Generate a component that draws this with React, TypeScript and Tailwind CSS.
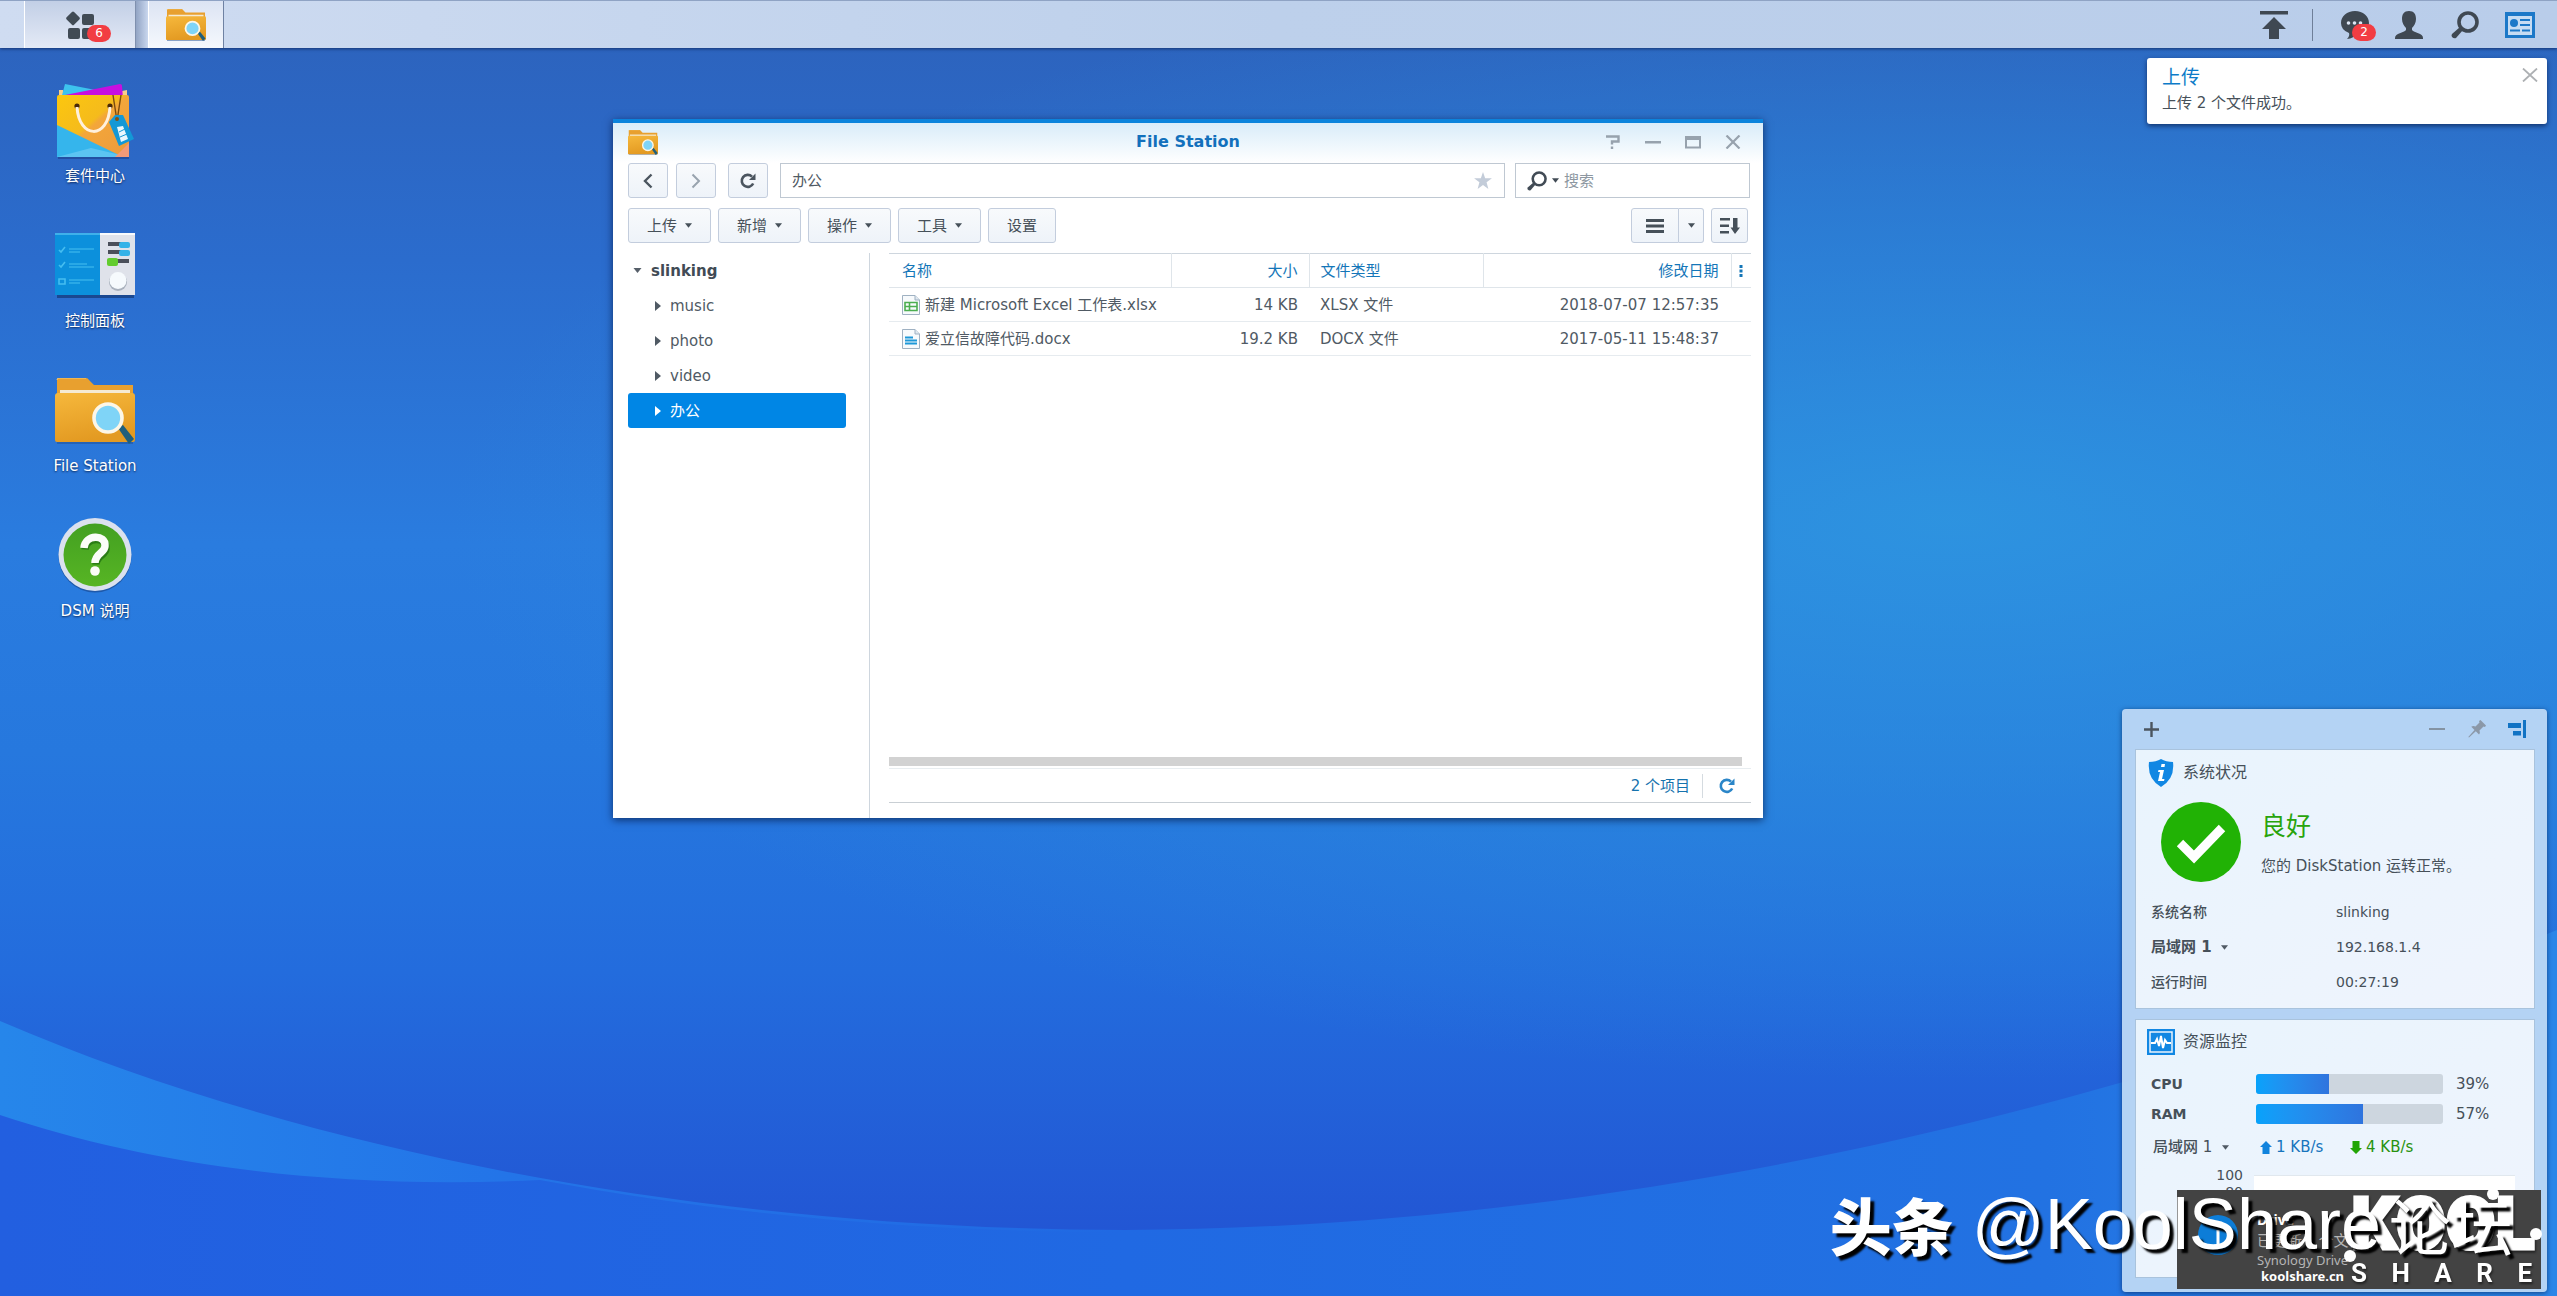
import React from "react";

const FONT = "font-['DejaVu_Sans','Noto_Sans_CJK_SC',sans-serif]";

function Wallpaper() {
  return (
    <svg aria-hidden="true" className="absolute inset-0 h-full w-full" viewBox="0 0 2557 1296" preserveAspectRatio="none">
      <defs>
        <linearGradient id="sky" x1="0" y1="0" x2="0" y2="1">
          <stop offset="0" stopColor="#2d62bb" />
          <stop offset="0.2" stopColor="#2b6ccd" />
          <stop offset="0.42" stopColor="#2a7cdf" />
          <stop offset="0.58" stopColor="#2678de" />
          <stop offset="0.75" stopColor="#236cdd" />
          <stop offset="0.95" stopColor="#2256d4" />
          <stop offset="1" stopColor="#2256d4" />
        </linearGradient>
        <radialGradient id="glow" gradientUnits="userSpaceOnUse" cx="0" cy="0" r="1" gradientTransform="translate(1950 520) scale(1500 560)">
          <stop offset="0" stopColor="#2e97e0" stopOpacity="0.85" />
          <stop offset="0.5" stopColor="#2c90de" stopOpacity="0.5" />
          <stop offset="1" stopColor="#2c90de" stopOpacity="0" />
        </radialGradient>
        <linearGradient id="waveA" x1="0" y1="0" x2="1" y2="0">
          <stop offset="0" stopColor="#2686ea" />
          <stop offset="0.2" stopColor="#2374e8" />
          <stop offset="0.44" stopColor="#2069e3" />
          <stop offset="0.8" stopColor="#2272e2" />
          <stop offset="1" stopColor="#2b86e8" />
        </linearGradient>
        <linearGradient id="waveB" x1="0" y1="0" x2="1" y2="0">
          <stop offset="0" stopColor="#225fe0" />
          <stop offset="1" stopColor="#2069e3" />
        </linearGradient>
      </defs>
      <rect width="2557" height="1296" fill="url(#sky)" />
      <rect width="2557" height="1296" fill="url(#glow)" />
      <path d="M0 1021C300 1150 700 1229 1125 1230C1600 1228 2100 1120 2557 930V1296H0Z" fill="url(#waveA)" />
      <path d="M0 1115C150 1165 330 1190 540 1180C740 1217 930 1232 1125 1232V1296H0Z" fill="url(#waveB)" />
    </svg>
  );
}

function Caret({ className = "" }: { className?: string }) {
  return (
    <svg aria-hidden="true" viewBox="0 0 8 5" className={`h-[5px] w-[7px] shrink-0 ${className}`}>
      <path d="M0 0H8L4 5Z" fill="currentColor" />
    </svg>
  );
}

function FolderSearch({ className }: { className: string }) {
  return (
    <svg aria-hidden="true" viewBox="0 0 80 66" className={className} preserveAspectRatio="none">
      <defs>
        <linearGradient id="folder" x1="0" y1="0" x2="0.3" y2="1">
          <stop offset="0" stopColor="#f6b83c" />
          <stop offset="1" stopColor="#e39a22" />
        </linearGradient>
      </defs>
      <path d="M2 64H78V66H2Z" fill="#1f4d92" opacity="0.5" />
      <path d="M2 2Q2 0 4 0H31Q33 0 34 2L39 7H78V20H2Z" fill="#e8a02f" />
      <path d="M2 2Q2 0 4 0H31" stroke="#f7cb74" fill="none" />
      <path d="M5 12H75V20H5Z" fill="#f5ead2" />
      <path d="M0 18Q0 15 3 15H77Q80 15 80 18V62Q80 64 78 64H2Q0 64 0 62Z" fill="url(#folder)" />
      <path d="M63 50L68 47L79 61L74 66Z" fill="#1f5f7c" />
      <circle cx="53" cy="40" r="14" fill="#7fd4f7" stroke="#fdf6e6" strokeWidth="3.6" />
    </svg>
  );
}

function BagIcon() {
  return (
    <svg aria-hidden="true" viewBox="0 0 80 76" className="h-19 w-20">
      <defs>
        <linearGradient id="bag" x1="0" y1="0" x2="1" y2="1">
          <stop offset="0" stopColor="#fcc70e" />
          <stop offset="0.45" stopColor="#f5bb1c" />
          <stop offset="0.5" stopColor="#f3a63a" />
          <stop offset="1" stopColor="#ec9a3c" />
        </linearGradient>
      </defs>
      <path d="M3 74H74V76H3Z" fill="#1d3f8a" opacity="0.6" />
      <path d="M4 7H8L10 14H4ZM67 8L72 7V14H67Z" fill="#f7cf8c" />
      <path d="M10 1L66 12L64 16H6Z" fill="#3dc3ee" />
      <path d="M10 12L65 1Q67 1 67 3L68 15H12Z" fill="#c70fe0" />
      <path d="M2 14Q2 12 4 12H72Q74 12 74 14V74H2Z" fill="url(#bag)" />
      <path d="M2 42L68 74H2Z" fill="#35b5ec" />
      <path d="M2 74L36 65L74 74Z" fill="#5cc4f2" />
      <path d="M60 74L74 60V74Z" fill="#f39a78" />
      <circle cx="22" cy="23" r="2.6" fill="#4a2a08" />
      <circle cx="55" cy="23" r="2.6" fill="#4a2a08" />
      <path d="M22 24C24 56 53 57 55 24" fill="none" stroke="#fff0dc" strokeWidth="3" />
      <path d="M58 12L62 38L66 12" fill="none" stroke="#7a4b10" strokeWidth="1.4" />
      <path d="M54 39L60 32L68 32L79 56L64 63Z" fill="#1398d6" />
      <circle cx="62" cy="36" r="2" fill="#87510e" />
      <path d="M62 44L68 43L73 56L66 59Z" fill="#e9f7fd" />
      <path d="M64 49L70 46M65 54L72 51" stroke="#1398d6" strokeWidth="1" />
    </svg>
  );
}

function ControlPanelIcon() {
  return (
    <svg aria-hidden="true" viewBox="0 0 80 66" className="h-[66px] w-20">
      <path d="M2 62H79V65H2Z" fill="#163c7c" opacity="0.75" />
      <path d="M0 0H45V62H0Z" fill="#0c90dc" />
      <path d="M0 0H45V2H0Z" fill="#3fb0ea" />
      <path d="M45 0H80V62H45Z" fill="#dfe2ea" />
      <path d="M45 0H80V2H45Z" fill="#f8fafc" />
      <g stroke="#45bdf0" strokeWidth="1.6" fill="none">
        <path d="M4 17L6 19L10 14M4 32L6 34L10 29M4 46H10V51H4Z" />
        <path d="M14 16H39M14 19H25M14 31H32M14 34H39M14 47H39M14 50H25" opacity="0.7" />
      </g>
      <path d="M53 9H66V13H53ZM53 17H66V21H53ZM61 26H74V30H61Z" fill="#4a4f5a" />
      <rect x="64" y="9" width="11" height="6" rx="2" fill="#34b2e8" />
      <rect x="64" y="17" width="11" height="6" rx="2" fill="#34b2e8" />
      <rect x="52" y="25" width="11" height="8" rx="2" fill="#62cc2e" />
      <circle cx="63" cy="49" r="9" fill="#a9b1bd" />
      <circle cx="63" cy="47.500" r="8.500" fill="#f6fafd" />
    </svg>
  );
}

function HelpIcon() {
  return (
    <svg aria-hidden="true" viewBox="0 0 74 76" className="h-19 w-[74px]">
      <defs>
        <linearGradient id="help" x1="0" y1="0" x2="0" y2="1">
          <stop offset="0" stopColor="#43a021" />
          <stop offset="1" stopColor="#57b524" />
        </linearGradient>
      </defs>
      <circle cx="37" cy="38" r="36.500" fill="#153e80" opacity="0.55" />
      <circle cx="37" cy="36.500" r="36.500" fill="#dbe1ee" />
      <circle cx="37" cy="37" r="31.500" fill="url(#help)" />
      <path d="M26 30C27 17 48 17 47 29C47 36 37 36 37 45" fill="none" stroke="#2b7d14" strokeWidth="7.500" transform="translate(1 1.500)" />
      <path d="M26 30C27 16 48 16 47 28C47 35 37 35 37 45" fill="none" stroke="#fbfdf7" strokeWidth="7.500" />
      <circle cx="37" cy="53" r="4.800" fill="#fbfdf7" />
    </svg>
  );
}

const desktopItems = [
  { label: "套件中心", icon: <BagIcon /> },
  { label: "控制面板", icon: <ControlPanelIcon /> },
  { label: "File Station", icon: <FolderSearch className="h-[66px] w-20" /> },
  { label: "DSM 说明", icon: <HelpIcon /> },
];

function Magnifier({ className }: { className: string }) {
  return (
    <svg aria-hidden="true" viewBox="0 0 28 28" className={className}>
      <circle cx="17" cy="11" r="9" fill="none" stroke="currentColor" strokeWidth="3.600" />
      <path d="M9 16L12 19L5 27Q3 28 1 26Q0 24 1 23Z" fill="currentColor" />
    </svg>
  );
}

function Refresh({ className }: { className: string }) {
  return (
    <svg aria-hidden="true" viewBox="0 0 16 16" className={className}>
      <path d="M13.200 10.500A6 6 0 1 1 12 3.600" fill="none" stroke="currentColor" strokeWidth="2.600" />
      <path d="M15.500 0.500V7H9Z" fill="currentColor" />
    </svg>
  );
}

function Taskbar() {
  return (
    <header className="relative z-10 flex h-12 shrink-0 items-stretch border-t border-[#8fa3c4] bg-linear-to-r from-[#cfdcf1] via-[#bdd0eb] to-[#b9cdea] shadow-[0_1px_3px_rgba(10,30,80,0.7)]">
      <button aria-label="主菜单" className="ml-6 flex w-28 items-center justify-center border-x border-l-white border-r-[#7f90ae] bg-linear-to-b from-[#c2cfe6] to-[#e4eaf6]">
        <span className="relative">
          <svg aria-hidden="true" viewBox="0 0 28 28" className="h-7 w-7 text-[#414b55]">
            <rect x="2" y="2" width="10.500" height="10.500" rx="1.500" transform="rotate(45 7 7)" fill="currentColor" />
            <rect x="16" y="3" width="12" height="11" rx="2" fill="currentColor" />
            <rect x="2" y="17" width="12" height="11" rx="2" fill="currentColor" />
            <rect x="16" y="17" width="12" height="11" rx="2" fill="currentColor" />
          </svg>
          <span className="absolute top-[14px] left-[21px] flex h-[17px] w-6 items-center justify-center rounded-full bg-[#f23d43] text-[12px] text-white">6</span>
        </span>
      </button>
      <div className="w-3 bg-linear-to-r from-[#92a4c4] to-[#c9d7ee]" />
      <button aria-label="File Station" className="flex w-[76px] items-center justify-center border-x border-l-white border-r-[#6f82a3] bg-linear-to-b from-[#dce4f3] to-[#f5f8fd]">
        <FolderSearch className="h-8 w-10" />
      </button>
      <div className="flex-1" />
      <nav aria-label="系统托盘" className="mr-[22px] flex items-center text-[#3f4852]">
        <button aria-label="上传队列">
          <svg aria-hidden="true" viewBox="0 0 28 28" className="h-7 w-7">
            <path d="M0 0H28V3.500H0ZM14 6L26 18H19V28H9V18H2Z" fill="currentColor" />
          </svg>
        </button>
        <div className="mr-7 ml-6 h-8 w-px bg-[#6f7f98]" />
        <button aria-label="通知" className="relative">
          <svg aria-hidden="true" viewBox="0 0 28 28" className="h-7 w-7">
            <path d="M14 0C22 0 28 5 28 12S22 24 14 24Q13 27 6 28Q9 25 8 22Q0 19 0 12C0 5 6 0 14 0Z" fill="currentColor" />
            <g fill="#dce6f5">
              <circle cx="7.500" cy="12" r="1.800" />
              <circle cx="13.500" cy="12" r="1.800" />
              <circle cx="19.500" cy="12" r="1.800" />
            </g>
          </svg>
          <span className="absolute top-[13px] left-[11px] flex h-[17px] w-6 items-center justify-center rounded-full bg-[#f23d43] text-[12px] text-white">2</span>
        </button>
        <button aria-label="用户" className="ml-[26px]">
          <svg aria-hidden="true" viewBox="0 0 28 28" className="h-7 w-7">
            <path d="M14 0C19 0 21 3 21 8C21 12 19 15 17 17V19C19 22 28 22 28 27V28H0V27C0 22 9 22 11 19V17C9 15 7 12 7 8C7 3 9 0 14 0Z" fill="currentColor" />
          </svg>
        </button>
        <button aria-label="搜索" className="ml-7">
          <Magnifier className="h-7 w-7" />
        </button>
        <button aria-label="桌面小工具" className="ml-[26px]">
          <svg aria-hidden="true" viewBox="0 0 30 26" className="h-[26px] w-[30px]">
            <path d="M0 0H30V26H0ZM3 4V23H27V4Z" fill="#1c78c8" fillRule="evenodd" />
            <rect x="3" y="4" width="24" height="19" fill="#c6dcf3" />
            <circle cx="9" cy="11" r="4" fill="#1c78c8" />
            <path d="M15 7H25V9H15ZM15 12H25V14H15ZM5 17.500H15V19.500H5ZM17 17.500H25V19.500H17Z" fill="#1c78c8" />
          </svg>
        </button>
      </nav>
    </header>
  );
}

const toolButton =
  "flex h-[35px] items-center justify-center rounded-[3px] border border-[#c3cddd] bg-linear-to-b from-[#f8fafc] to-[#eef3f9] text-[15px] leading-5 text-[#465059]";

const menus = ["上传", "新增", "操作", "工具"];
const folders = ["music", "photo", "video", "办公"];
const files = [
  { name: "新建 Microsoft Excel 工作表.xlsx", size: "14 KB", type: "XLSX 文件", date: "2018-07-07 12:57:35", sheet: true },
  { name: "爱立信故障代码.docx", size: "19.2 KB", type: "DOCX 文件", date: "2017-05-11 15:48:37", sheet: false },
];

function FileIcon({ sheet }: { sheet: boolean }) {
  return (
    <svg aria-hidden="true" viewBox="0 0 18 20" className="h-5 w-[18px] shrink-0">
      <path d="M0.500 0.500H13L17.500 5V19.500H0.500Z" fill="#f7fafc" stroke="#9fb1c2" />
      <path d="M13 0.500V5H17.500" fill="#dfe8f0" stroke="#9fb1c2" />
      {sheet ? (
        <path d="M3 7.500H15V15.500H3ZM3 11.500H15M7.500 7.500V15.500" fill="none" stroke="#4cae50" strokeWidth="1.600" />
      ) : (
        <path d="M3 8.500H11M3 11.500H15M3 14.500H15" stroke="#1e98d8" strokeWidth="2" />
      )}
    </svg>
  );
}

function FileStationWindow() {
  return (
    <section
      aria-label="File Station"
      className="absolute top-[119px] left-[613px] flex h-[699px] w-[1150px] flex-col border-t-4 border-[#0b83dc] bg-white text-[15px] leading-5 text-[#505a64] shadow-[0_2px_8px_rgba(5,25,70,0.75)]"
    >
      <div className="flex h-10 shrink-0 items-center bg-linear-to-b from-[#d9ecf9] to-white px-[15px] pb-[2px]">
        <div className="flex-1 pr-[7px]">
          <FolderSearch className="h-[25px] w-[30px]" />
        </div>
        <h1 className="text-[16px] font-bold text-[#1270bc]">File Station</h1>
        <div className="flex flex-1 items-center justify-end gap-6 pr-[7px] text-[#97a2ad]">
          <button aria-label="帮助">
            <svg aria-hidden="true" viewBox="0 0 16 14" className="h-[14px] w-4"><path d="M1 1.500H13.500V6.500H7V9.500" fill="none" stroke="currentColor" strokeWidth="2.400" /><path d="M5.800 11.500H8.200V14H5.800Z" fill="currentColor" /></svg>
          </button>
          <button aria-label="最小化">
            <svg aria-hidden="true" viewBox="0 0 16 14" className="h-[14px] w-4"><path d="M0 6H16V8.500H0Z" fill="currentColor" /></svg>
          </button>
          <button aria-label="最大化">
            <svg aria-hidden="true" viewBox="0 0 16 14" className="h-[14px] w-4"><path d="M0 1H16V13.500H0ZM2 5V11.500H14V5Z" fill="currentColor" fillRule="evenodd" /></svg>
          </button>
          <button aria-label="关闭">
            <svg aria-hidden="true" viewBox="0 0 16 14" className="h-[14px] w-4"><path d="M1.500 0.500L14.500 13.500M14.500 0.500L1.500 13.500" stroke="currentColor" strokeWidth="2.200" /></svg>
          </button>
        </div>
      </div>

      <div className="flex shrink-0 pr-[13px] pl-[15px]">
        <button aria-label="后退" className={`${toolButton} w-10`}>
          <svg aria-hidden="true" viewBox="0 0 10 16" className="h-4 w-[10px]"><path d="M8.500 1.500L2 8L8.500 14.500" fill="none" stroke="#4b555f" strokeWidth="2.400" /></svg>
        </button>
        <button aria-label="前进" className={`${toolButton} ml-2 w-10`}>
          <svg aria-hidden="true" viewBox="0 0 10 16" className="h-4 w-[10px]"><path d="M1.500 1.500L8 8L1.500 14.500" fill="none" stroke="#98a3ae" strokeWidth="2" /></svg>
        </button>
        <button aria-label="刷新" className={`${toolButton} ml-3 w-10`}>
          <Refresh className="h-4 w-4 text-[#4b555f]" />
        </button>
        <label className="ml-3 flex h-[35px] flex-1 items-center border border-[#bfc8d2] pr-3 pl-[11px]">
          <input aria-label="路径" defaultValue="办公" className="min-w-0 flex-1 outline-none" />
          <svg aria-hidden="true" viewBox="0 0 20 19" className="h-[17px] w-[18px]"><path d="M10 0L12.400 7H20L14 11.500L16 19L10 14.500L4 19L6 11.500L0 7H7.600Z" fill="#c3ccd9" /></svg>
        </label>
        <label className="ml-[10px] flex h-[35px] w-[235px] items-center border border-[#bfc8d2] px-[11px]">
          <Magnifier className="h-5 w-5 text-[#414b55]" />
          <Caret className="ml-[5px] text-[#414b55]" />
          <input aria-label="搜索" placeholder="搜索" className="ml-[5px] min-w-0 flex-1 outline-none placeholder:text-[#8d97a1]" />
        </label>
      </div>

      <div className="mt-[10px] flex shrink-0 gap-[7px] pr-[15px] pl-[15px]">
        {menus.map((m) => (
          <button key={m} aria-haspopup="menu" className={`${toolButton} w-[83px] gap-2`}>
            {m}
            <Caret />
          </button>
        ))}
        <button className={`${toolButton} w-[68px]`}>设置</button>
        <div className="flex-1" />
        <div className="flex">
          <button aria-label="列表视图" className={`${toolButton} w-12 rounded-r-none`}>
            <svg aria-hidden="true" viewBox="0 0 18 14" className="h-[14px] w-[18px]"><path d="M0 0H18V3H0ZM0 5.500H18V8.500H0ZM0 11H18V14H0Z" fill="currentColor" /></svg>
          </button>
          <button aria-label="视图选项" className={`${toolButton} w-[25px] rounded-l-none border-l-0`}>
            <Caret />
          </button>
        </div>
        <button aria-label="排序" className={`${toolButton} w-[37px]`}>
          <svg aria-hidden="true" viewBox="0 0 20 16" className="h-4 w-5"><path d="M0 0H10V2.500H0ZM0 6.500H9V9H0ZM0 13H9V15.500H0ZM13 0H17.500V9.500H20L15 16L10.500 9.500H13Z" fill="currentColor" /></svg>
        </button>
      </div>

      <div className="mt-[10px] flex min-h-0 flex-1">
        <nav aria-label="文件夹" className="w-[257px] shrink-0 border-r border-[#ced6de] pr-[23px] pl-[15px]">
          <button className="flex h-[35px] w-full items-center pl-[5px] font-bold text-[#414b55]">
            <Caret className="mr-[9px] w-[9px] text-[#565f69]" />
            slinking
          </button>
          {folders.map((f) => (
            <button
              key={f}
              className={`flex h-[35px] w-full items-center rounded-[3px] pl-[27px] ${f === "办公" ? "bg-[#0086e5] text-white" : "text-[#505a64]"}`}
            >
              <svg aria-hidden="true" viewBox="0 0 6 10" className="mr-[9px] h-[10px] w-[6px]"><path d="M0 0L6 5L0 10Z" fill="currentColor" /></svg>
              {f}
            </button>
          ))}
        </nav>
        <div className="mr-[12px] ml-[19px] flex min-w-0 flex-1 flex-col pb-[15px]">
          <table className="w-full table-fixed border-collapse">
            <colgroup>
              <col />
              <col className="w-[138px]" />
              <col className="w-[174px]" />
              <col className="w-[248px]" />
              <col className="w-[20px]" />
            </colgroup>
            <thead>
              <tr className="h-[34px] border-y border-t-[#ced6de] border-b-[#dfe5ea] text-[#1476b8]">
                <th className="border-r border-[#dfe5ea] pl-[13px] text-left font-normal">名称</th>
                <th className="border-r border-[#dfe5ea] pr-[11px] text-right font-normal">大小</th>
                <th className="border-r border-[#dfe5ea] pl-[11px] text-left font-normal">文件类型</th>
                <th className="border-r border-[#dfe5ea] pr-[12px] text-right font-normal">修改日期</th>
                <th className="font-normal">
                  <button aria-label="列选项" className="block w-full">
                    <svg aria-hidden="true" viewBox="0 0 4 12" className="mx-auto h-3 w-1"><path d="M0.500 0H3.500V3H0.500ZM0.500 4.500H3.500V7.500H0.500ZM0.500 9H3.500V12H0.500Z" fill="#1476b8" /></svg>
                  </button>
                </th>
              </tr>
            </thead>
            <tbody>
              {files.map((f) => (
                <tr key={f.name} className="h-[34px] border-b border-[#e6ebef] whitespace-nowrap">
                  <td className="pl-[13px]">
                    <span className="flex items-center gap-[5px]">
                      <FileIcon sheet={f.sheet} />
                      {f.name}
                    </span>
                  </td>
                  <td className="pr-[11px] text-right">{f.size}</td>
                  <td className="pl-[11px]">{f.type}</td>
                  <td className="pr-[12px] text-right">{f.date}</td>
                  <td />
                </tr>
              ))}
            </tbody>
          </table>
          <div className="flex-1" />
          <div className="mr-[9px] h-[9px] shrink-0 bg-[#d2d2d2]" />
          <footer className="mt-[2px] flex h-[35px] shrink-0 items-center justify-end border-y border-t-[#e8edf0] border-b-[#c9cfd4] pr-[16px] text-[#1673ae]">
            <span>2 个项目</span>
            <span className="mr-4 ml-3 h-6 w-px bg-[#d5dbe0]" />
            <button aria-label="刷新列表">
              <Refresh className="h-4 w-4 text-[#2b86c8]" />
            </button>
          </footer>
        </div>
      </div>
    </section>
  );
}

function Toast() {
  return (
    <section role="status" className="absolute top-[58px] right-[10px] flex h-[66px] w-[400px] justify-between rounded-[3px] bg-white pl-[15px] shadow-[0_2px_5px_rgba(5,25,70,0.7)]">
      <div className="pt-[7px]">
        <h2 className="text-[19px] leading-6 text-[#0d7bc8]">上传</h2>
        <p className="mt-1 text-[15px] leading-5 text-[#465059]">上传 2 个文件成功。</p>
      </div>
      <button aria-label="关闭通知" className="mt-[10px] mr-[9px] h-[14px] w-4">
        <svg aria-hidden="true" viewBox="0 0 16 14" className="h-[14px] w-4"><path d="M1 0.500L15 13.500M15 0.500L1 13.500" stroke="#adb0b3" strokeWidth="1.800" /></svg>
      </button>
    </section>
  );
}

const card = "border border-[#a9c3dd] bg-linear-to-br from-[#e9f4fd] to-[#eff4fd]";

function LanSelect({ id, className }: { id: string; className: string }) {
  return (
    <span className="flex items-center">
      <select id={id} aria-label="网络接口" className={`appearance-none bg-transparent ${className}`}>
        <option>局域网 1</option>
      </select>
      <Caret className="ml-[9px] text-[#505a64]" />
    </span>
  );
}

function Meter({ label, value }: { label: string; value: number }) {
  return (
    <div className="flex h-[30px] items-center">
      <span className="w-[105px] font-bold">{label}</span>
      <div role="progressbar" aria-label={label} aria-valuenow={value} aria-valuemin={0} aria-valuemax={100} className="h-5 w-[187px] overflow-hidden rounded-[3px] bg-[#cdd6df]">
        <div className="h-full bg-linear-to-r from-[#06a2fb] to-[#2f74de]" style={{ width: `${value}%` }} />
      </div>
      <span className="ml-[13px] text-[15px]">{value}%</span>
    </div>
  );
}

function Widgets() {
  return (
    <aside className="absolute right-[10px] bottom-1 flex h-[583px] w-[425px] flex-col rounded-[4px] bg-[#bad6f5]/96 pr-[12px] pb-[14px] pl-[13px] text-[14px] leading-5 text-[#465059] shadow-[0_1px_5px_rgba(5,25,70,0.6)]">
      <div className="flex h-10 shrink-0 items-center pr-[9px] pl-[9px] text-[#4b555f]">
        <button aria-label="添加小工具">
          <svg aria-hidden="true" viewBox="0 0 15 15" className="h-[15px] w-[15px]"><path d="M6.300 0H8.700V6.300H15V8.700H8.700V15H6.300V8.700H0V6.300H6.300Z" fill="currentColor" /></svg>
        </button>
        <div className="flex-1" />
        <button aria-label="最小化小工具">
          <svg aria-hidden="true" viewBox="0 0 16 4" className="h-1 w-4"><path d="M0 1H16V3H0Z" fill="#8493a3" /></svg>
        </button>
        <button aria-label="固定" className="ml-[23px]">
          <svg aria-hidden="true" viewBox="0 0 18 18" className="h-[18px] w-[18px]"><path d="M11 1L12.500 0L18 5.500L17 7L15.500 6.500L11.500 10.500Q12.500 13 11 14.500L7.800 11.300L1 17.500L0.300 17L6.500 10L3.300 6.800Q5 5.500 7.500 6.500L11.500 2.500Z" fill="#8b98a8" /></svg>
        </button>
        <button aria-label="停靠" className="ml-[22px]">
          <svg aria-hidden="true" viewBox="0 0 18 18" className="h-[18px] w-[18px]"><path d="M0 3H13V8H0ZM5 11H13V15.500H5ZM15 0H18V18H15Z" fill="#1173c4" /></svg>
        </button>
      </div>

      <section className={`${card} h-[260px] shrink-0 px-[15px]`}>
        <h2 className="mt-2 -ml-[3px] flex h-[30px] items-center gap-[9px] text-[16px]">
          <svg aria-hidden="true" viewBox="0 0 26 28" className="h-7 w-[26px]">
            <path d="M13 0Q18 3 25 3Q27 20 13 28Q-1 20 1 3Q8 3 13 0Z" fill="#1187e3" />
            <path d="M13.500 5H17L16.500 8H13ZM10.500 11H16L14 20H16.500L16 22H10L12 13H10Z" fill="#fff" />
          </svg>
          系统状况
        </h2>
        <div className="mt-[14px] flex">
          <svg aria-hidden="true" viewBox="0 0 80 80" className="ml-[10px] h-20 w-20">
            <circle cx="40" cy="40" r="40" fill="#21b205" />
            <path d="M19 41L33 55L61 26" fill="none" stroke="#fff" strokeWidth="9" />
          </svg>
          <div className="ml-5">
            <p className="mt-[9px] text-[25px] leading-8 text-[#28a40c]">良好</p>
            <p className="mt-[13px] text-[15px]">您的 DiskStation 运转正常。</p>
          </div>
        </div>
        <dl className="mt-[13px] grid grid-cols-[185px_1fr] text-[14px] leading-[35px]">
          <dt className="font-medium">系统名称</dt>
          <dd>slinking</dd>
          <dt><LanSelect id="status-lan" className="text-[15px] font-bold" /></dt>
          <dd>192.168.1.4</dd>
          <dt className="font-medium">运行时间</dt>
          <dd>00:27:19</dd>
        </dl>
      </section>

      <section className={`${card} mt-[10px] min-h-0 flex-1 overflow-hidden px-[15px]`}>
        <h2 className="mt-[7px] mb-[12px] -ml-[4px] flex h-[30px] items-center gap-2 text-[16px]">
          <svg aria-hidden="true" viewBox="0 0 28 26" className="h-[26px] w-7">
            <path d="M0 0H28V26H0Z" fill="#1187e3" />
            <path d="M3 3H25V23H3Z" fill="none" stroke="#e9f4fd" strokeWidth="1.500" />
            <path d="M4 14H8L10 10L12 17L14 7L16 19L18 11L20 14H24" fill="none" stroke="#fff" strokeWidth="2" />
          </svg>
          资源监控
        </h2>
        <Meter label="CPU" value={39} />
        <Meter label="RAM" value={57} />
        <div className="flex h-9 items-center pl-[2px] text-[15px]">
          <div className="w-[107px]"><LanSelect id="monitor-lan" className="font-medium" /></div>
          <svg aria-hidden="true" viewBox="0 0 12 13" className="h-[13px] w-3"><path d="M6 0L12 6H9.500V13H2.500V6H0Z" fill="#1183dd" /></svg>
          <span className="ml-1 w-[74px] text-[#1774bd]">1 KB/s</span>
          <svg aria-hidden="true" viewBox="0 0 12 13" className="h-[13px] w-3"><path d="M6 13L12 7H9.500V0H2.500V7H0Z" fill="#22a506" /></svg>
          <span className="ml-1 text-[#28920f]">4 KB/s</span>
        </div>
        <div className="mt-[2px] flex">
          <div className="w-[92px] text-right leading-[17px]">
            <p>100</p>
            <p>80</p>
          </div>
          <div className="mt-2 ml-[11px] h-20 w-[261px] border-t border-[#e1e8ee] bg-white" />
        </div>
      </section>
    </aside>
  );
}

function DriveNotice() {
  return (
    <section className="absolute right-4 bottom-[7px] h-[99px] w-[364px] bg-[#434343] text-white">
      <div className="flex pt-[25px] pl-[21px]">
        <svg aria-hidden="true" viewBox="0 0 40 40" className="h-10 w-10 shrink-0">
          <circle cx="20" cy="20" r="20" fill="#0d7dd8" />
          <path d="M18.500 10H21.500V13H18.500ZM18.500 15H21.500V30H18.500Z" fill="#fff" />
        </svg>
        <div className="-mt-[6px] ml-[19px] font-['Noto_Sans','Noto_Sans_CJK_SC',sans-serif] text-[13px] leading-[21px] whitespace-nowrap">
          <p className="text-[14px] font-bold">Drive</p>
          <p className="text-[15px] text-[#b5b5b5]">已更新 1 个文件</p>
          <p className="leading-[18px] text-[#b5b5b5]">Synology Drive</p>
          <p className="pl-1 leading-[14px] font-bold">koolshare.cn</p>
        </div>
      </div>
      <div className="absolute top-[3px] right-[9px] w-[181px] font-['Roboto',sans-serif] drop-shadow-[1px_2px_1px_rgba(0,0,0,0.5)]">
        <p className="text-[72px] leading-[64px] font-black [-webkit-text-stroke:3px_#fff]">KOOL</p>
        <p className="mt-[2px] flex justify-between text-[26px] leading-7 font-bold">
          {["S", "H", "A", "R", "E"].map((c) => (
            <span key={c}>{c}</span>
          ))}
        </p>
      </div>
      <svg aria-hidden="true" viewBox="0 0 200 76" className="absolute -top-1 -right-[2px] h-19 w-[200px]">
        <circle cx="150" cy="8" r="6" fill="#fff" />
        <circle cx="193" cy="48" r="6" fill="#fff" />
        <circle cx="7" cy="70" r="6" fill="#fff" />
      </svg>
    </section>
  );
}

function Watermark() {
  return (
    <p className="pointer-events-none absolute right-[44px] bottom-7 flex items-center leading-[88px] whitespace-nowrap text-white [text-shadow:4px_4px_2px_#000]">
      <span className="font-['Noto_Sans_CJK_SC',sans-serif] text-[62px] font-black">头条</span>
      <span className="ml-[18px] font-['Liberation_Sans',sans-serif] text-[72px]">@KoolShare</span>
      <span className="ml-2 font-['Noto_Sans_CJK_SC',sans-serif] text-[62px]">论坛</span>
    </p>
  );
}

export default function App() {
  return (
    <div lang="zh-CN" className={`relative flex h-screen flex-col overflow-hidden bg-[#2a7cdf] ${FONT}`}>
      <Wallpaper />
      <Taskbar />
      <main className="relative flex-1">
        <ul className="ml-[35px] flex w-[120px] flex-col pt-[35px]">
          {desktopItems.map((item) => (
            <li key={item.label} className="h-[145px]">
              <button className="flex w-full flex-col items-center text-[15px] leading-5 text-white [text-shadow:0_1px_2px_rgba(0,20,60,0.8)]">
                <span className="flex h-[76px] items-center">{item.icon}</span>
                <span className="mt-[7px]">{item.label}</span>
              </button>
            </li>
          ))}
        </ul>
      </main>
      <FileStationWindow />
      <Toast />
      <Widgets />
      <DriveNotice />
      <Watermark />
    </div>
  );
}
